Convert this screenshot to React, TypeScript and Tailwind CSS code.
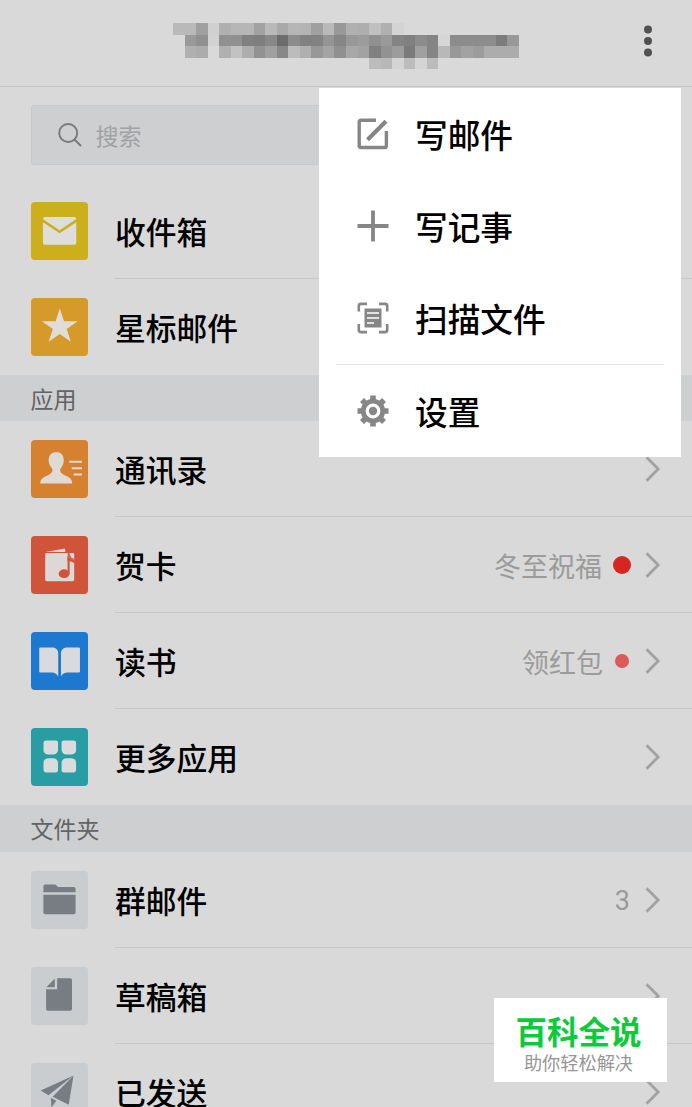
import React from "react";

const MOSAIC: string[][] = [
  ["b9", "b9", "a0", "d0", "b0", "b6", "b6", "a2", "b9", "a9", "b6", "b4", "a0", "b9", "98", "b0", "ae", "c0", "b0", "d4"],
  ["", "9a", "90", "d2", "90", "90", "80", "7e", "88", "6c", "8c", "82", "82", "94", "86", "98", "9c", "90", "9a", "84", "80", "8c", "84", "d6", "8c", "8c", "8c", "8c", "7c", "98"],
  ["", "b0", "ac", "", "b0", "c2", "ae", "92", "a0", "88", "bc", "b0", "98", "a4", "90", "a8", "a2", "80", "92", "9c", "7a", "a0", "84", "b8", "98", "a2", "9c", "ac", "ac", "ac"],
  ["", "", "", "", "", "", "", "", "", "", "", "", "", "", "", "", "", "bc", "b8", "d4", "bc", "d4", "bc"],
];

const CensoredAccount = () => (
  <svg className="block h-[46px] w-[346px]" viewBox="0 0 30 4" preserveAspectRatio="none" shapeRendering="crispEdges">
    {MOSAIC.map((row, y) =>
      row.map((shade, x) =>
        shade ? <rect key={`${x}-${y}`} x={x} y={y} width="1" height="1" fill={`#${shade}${shade}${shade}`} /> : null
      )
    )}
  </svg>
);

const Chevron = () => (
  <svg className="block h-[28px] w-[16px]" viewBox="0 0 16 28" fill="none" stroke="#a2a2a2" strokeWidth="2.8">
    <path d="M1.5 2.3 13.2 14 1.5 25.7" />
  </svg>
);

const MailIcon = () => (
  <>
    <path d="M12 17.2Q12 15 14.2 15H43.6Q45.6 15 45.6 17.2L28.8 28.500Z" />
    <path d="M12 20.5 28.8 31.5 45.6 20.5V41Q45.6 43 43.6 43H14Q12 43 12 41Z" />
  </>
);

const StarIcon = () => (
  <path d="M29 10.5 33.3 23.3H47L36 31.3 40.1 44 29 36.2 17.8 44 22 31.3 11 23.3H24.8Z" />
);

const ContactIcon = () => (
  <>
    <path d="M25.5 12C30 12 33 15.5 33 20.500C33 24.500 31 27 29.500 29.500C29 32 30 33.500 33 35C38.500 37.500 41.500 39 41.500 43.800H9.300C9.300 39 12.500 37.500 18 35C21 33.500 22 32 21.500 29.500C20 27 17.700 24.500 17.700 20.500C17.700 15.500 21 12 25.500 12Z" />
    <path d="M38.500 21H51.300V23H38.500ZM41 27.400H51.300V29.400H41ZM43 33.800H51.300V35.800H43Z" />
  </>
);

const CardIcon = () => (
  <>
    <path d="M14.500 16 34 12.700 34.800 16Z" />
    <path d="M14.300 18.500Q14.300 17 15.800 17H37V19.500C38.500 22 41 23 43.500 24V43.800Q43.500 45.500 42 45.500H15.800Q14.300 45.500 14.300 44Z" />
    <path d="M38.500 17H42Q43.500 17 43.500 18.500V23C41.500 22.800 39.500 21 38.500 17Z" />
    <g fill="#cf543a">
      <ellipse cx="33.300" cy="38" rx="5.500" ry="4.400" />
      <path d="M36.800 20.500H38.900V38H36.800Z" />
      <path d="M36.800 20.500C38.500 22.500 41 22.500 43.800 24.500V27.500C41.500 26 39 25.500 36.800 25Z" />
    </g>
  </>
);

const BookIcon = () => (
  <>
    <path d="M8.300 16.500Q8.300 15.500 9.300 15.500H21C24.500 15.500 27.400 17.500 27.400 21V44.800C25.500 42 24 40.900 20 40.900H9.300Q8.300 40.900 8.300 39.900Z" />
    <path d="M49.300 16.500Q49.300 15.500 48.300 15.500H36.600C33.100 15.500 30.200 17.500 30.200 21V44.800C32.100 42 33.600 40.900 37.600 40.900H48.300Q49.300 40.900 49.300 39.900Z" />
  </>
);

const AppsIcon = () => (
  <>
    <path d="M15 12.500H25Q27.200 12.500 27.200 14.700V22.500Q26.800 26 23 26.800H17Q13 26 12.600 23V14.800Q12.600 12.500 15 12.500Z" />
    <path d="M33 12.500H43Q45.400 12.500 45.400 14.800V23Q45 26 41 26.800H35Q31.200 26 30.800 22.500V14.700Q30.800 12.500 33 12.500Z" />
    <path d="M17 30.400H23Q26.800 31.200 27.200 34.700V42.500Q27.200 44.700 25 44.700H15Q12.600 44.700 12.600 42.400V34.200Q13 31.200 17 30.400Z" />
    <path d="M35 30.400H41Q45 31.200 45.400 34.200V42.400Q45.400 44.700 43 44.700H33Q30.800 44.700 30.800 42.500V34.700Q31.200 31.200 35 30.400Z" />
  </>
);

const FolderIcon = () => (
  <>
    <path d="M12.500 15.300Q12.500 13.500 14.300 13.500H24.500L27.300 16H43Q44.900 16 44.900 18V21.500H12.500Z" />
    <path d="M12.500 23.800H44.900V41.800Q44.900 43.600 43 43.600H14.500Q12.500 43.600 12.500 41.800Z" />
  </>
);

const DraftIcon = () => (
  <>
    <path d="M24 11.500V20.300H15.500Z" />
    <path d="M26.300 11.300H39.500Q41.300 11.300 41.300 13V42.200Q41.300 44 39.500 44H17Q15.200 44 15.200 42.200V22.500H26.300Z" />
  </>
);

const SentIcon = () => (
  <>
    <path d="M42.800 12.500 9.800 27.700 17.600 32.500Z" />
    <path d="M42.800 12.500 21.800 34 38 42Z" />
    <path d="M20 35 25.500 38 20.500 45Z" />
  </>
);

interface MailRow {
  label: string;
  tile: string;
  icon: React.ReactNode;
  note?: React.ReactNode;
}

const inbox: MailRow[] = [
  { label: "收件箱", tile: "bg-[#cdaf1b] text-[#dddddb]", icon: <MailIcon /> },
  { label: "星标邮件", tile: "bg-[#d59a2a] text-[#e0ddd8]", icon: <StarIcon /> },
];

const apps: MailRow[] = [
  { label: "通讯录", tile: "bg-[#d6812f] text-[#dfdad6]", icon: <ContactIcon /> },
  {
    label: "贺卡",
    tile: "bg-[#cf543a] text-[#ddd7d6]",
    icon: <CardIcon />,
    note: (
      <>
        <span>冬至祝福</span>
        <span className="ml-[11px] mr-[14px] size-[18px] rounded-full bg-[#d7261f]" />
      </>
    ),
  },
  {
    label: "读书",
    tile: "bg-[#1d79d0] text-[#d8dadd]",
    icon: <BookIcon />,
    note: (
      <>
        <span>领红包</span>
        <span className="ml-[12px] mr-[16px] size-[14px] rounded-full bg-[#dc5a57]" />
      </>
    ),
  },
  { label: "更多应用", tile: "bg-[#289da3] text-[#d8dcdc]", icon: <AppsIcon /> },
];

const folders: MailRow[] = [
  {
    label: "群邮件",
    tile: "bg-[#c9cdd0] text-[#777d82]",
    icon: <FolderIcon />,
    note: <span className="mr-[15px] pt-[3px] font-['Roboto']">3</span>,
  },
  { label: "草稿箱", tile: "bg-[#c9cdd0] text-[#777d82]", icon: <DraftIcon /> },
  { label: "已发送", tile: "bg-[#c9cdd0] text-[#777d82]", icon: <SentIcon /> },
];

const RowList = ({ rows }: { rows: MailRow[] }) => (
  <ul>
    {rows.map((row, i) => (
      <li key={row.label} className="flex h-24 items-center pl-[30.600px]">
        <div className={`size-[57.600px] shrink-0 rounded-[4px] ${row.tile}`}>
          <svg className="block size-full" viewBox="0 0 58 58" fill="currentColor">
            {row.icon}
          </svg>
        </div>
        <div
          className={`ml-[26.800px] flex h-full flex-1 items-center border-b pr-[31px] ${
            i < rows.length - 1 ? "border-[#c7c7c7]" : "border-transparent"
          }`}
        >
          <span className="flex-1 pt-[2px] text-[30.800px] leading-none font-medium text-black">{row.label}</span>
          <div className="flex items-center pt-px text-[27px] leading-none text-[#9b9b9b]">
            {row.note}
            <Chevron />
          </div>
        </div>
      </li>
    ))}
  </ul>
);

const SectionTitle = ({ className = "h-[46px]", children }: { className?: string; children: React.ReactNode }) => (
  <h2 className={`flex items-center bg-[#cecfd1] pl-[30.600px] text-[23px] leading-none text-[#626365] ${className}`}>
    {children}
  </h2>
);

const MenuItem = ({ label, children }: { label: string; children: React.ReactNode }) => (
  <li className="flex h-[92px] items-center pl-[37px]">
    <svg className="size-[34px]" viewBox="0 0 34 34" fill="none" stroke="#868686" strokeWidth="3.400">
      {children}
    </svg>
    <span className="ml-[25px] text-[32.700px] leading-none font-medium text-black">{label}</span>
  </li>
);

const ActionMenu = () => (
  <ul className="absolute top-[88px] left-[319px] h-[369px] w-[362px] bg-white">
    <MenuItem label="写邮件">
      <path d="M20 3.200H5Q3.200 3.200 3.200 5V28.800Q3.200 30.500 5 30.500H29Q30.400 30.500 30.400 28.800V14" />
      <path d="M11.500 22.800 30 4.300" strokeWidth="4.200" />
    </MenuItem>
    <MenuItem label="写记事">
      <path d="M17 1.500V32.500M1.500 17H32.500" strokeWidth="3.800" />
    </MenuItem>
    <MenuItem label="扫描文件">
      <path
        d="M2.800 10.500V5Q2.800 2.900 5 2.900H11M23 2.900H29Q31.200 2.900 31.200 5V10.500M31.200 23V29Q31.200 31.100 29 31.100H23M11 31.100H5Q2.800 31.100 2.800 29V23"
        strokeWidth="2.600"
      />
      <path d="M8.500 7.500H25.500V26.500H8.500Z" fill="#868686" stroke="none" />
      <path d="M11 12H23M11 17H23M11 22H18" stroke="#fff" strokeWidth="1.600" />
    </MenuItem>
    <li className="mx-[17px] h-px bg-[#e3e3e3]" />
    <MenuItem label="设置">
      <circle cx="17" cy="17" r="9.800" strokeWidth="4.800" />
      <circle cx="17" cy="17" r="4.200" fill="#868686" stroke="none" />
      <path
        d="M17 1.500V8M17 26V32.500M1.500 17H8M26 17H32.500M6 6 10 10M24 24 28 28M28 6 24 10M10 24 6 28"
        strokeWidth="5.600"
      />
    </MenuItem>
  </ul>
);

export default function App() {
  return (
    <div className="relative h-[1107px] w-[692px] overflow-hidden bg-[#d9d9d9] font-['Noto_Sans_CJK_SC',sans-serif]">
      <header className="flex h-[87px] justify-between border-b border-[#c3c3c3] pt-[23px] pr-[39px] pl-[173px]">
        <CensoredAccount />
        <svg className="mt-[2px] h-[32px] w-[10px]" viewBox="0 0 10 32" fill="#515151">
          <circle cx="5" cy="4.500" r="4" />
          <circle cx="5" cy="16" r="4" />
          <circle cx="5" cy="27.500" r="4" />
        </svg>
      </header>

      <div className="px-[30.600px] pt-[18px] pb-[18px]">
        <div className="flex h-[60px] items-center rounded-[3px] border border-[#c6c8ca] bg-[#cecfd1] pl-[26px] text-[23px] leading-none text-[#a0a2a4]">
          <svg className="size-[24px]" viewBox="0 0 24 24" fill="none" stroke="#77797b" strokeWidth="1.900">
            <circle cx="10.200" cy="10" r="9" />
            <path d="M16.500 16.500 23 23" />
          </svg>
          <span className="ml-[14px]">搜索</span>
        </div>
      </div>

      <RowList rows={inbox} />
      <SectionTitle>应用</SectionTitle>
      <RowList rows={apps} />
      <SectionTitle className="h-[47px]">文件夹</SectionTitle>
      <RowList rows={folders} />

      <ActionMenu />

      <div className="absolute top-[998px] left-[494px] flex h-[84px] w-[173px] flex-col items-center bg-white pt-[17px] pr-[4px] leading-none">
        <span className="text-[31.500px] font-bold text-[#0bcb38]">百科全说</span>
        <span className="mt-[6px] text-[18.200px] text-[#969696]">助你轻松解决</span>
      </div>
    </div>
  );
}
